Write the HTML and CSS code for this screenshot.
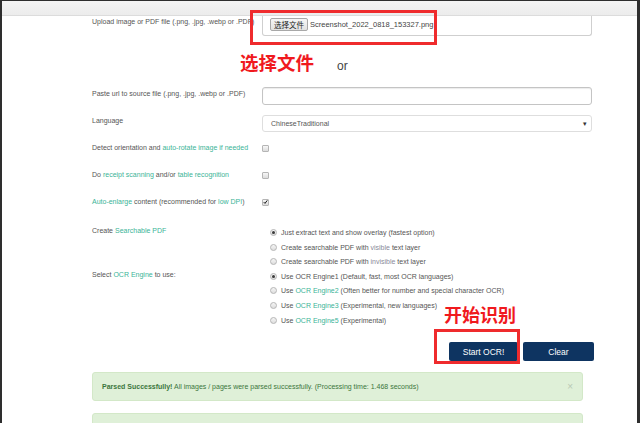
FILE: index.html
```html
<!DOCTYPE html>
<html lang="en">
<head>
<meta charset="utf-8">
<title>OCR upload</title>
<link rel="stylesheet" href="styles.css">
</head>
<body>
<div class="frame">
  <div class="topbar"></div>
  <div class="form">
    <div class="row row-upload">
      <div class="label">Upload image or PDF file (.png, .jpg, .webp or .PDF)</div>
      <div class="filebox">
        <span class="filebtn">选择文件</span><span class="filename">Screenshot_2022_0818_153327.png</span>
      </div>
    </div>
    <div class="row row-or"><span class="or">or</span></div>
    <div class="row row-url">
      <div class="label">Paste url to source file (.png, .jpg, .webp or .PDF)</div>
      <div class="input"></div>
    </div>
    <div class="row row-lang">
      <div class="label">Language</div>
      <div class="select"><span>ChineseTraditional</span><span class="caret">▾</span></div>
    </div>
    <div class="row row-check first">
      <div class="label">Detect orientation and <span class="link">auto-rotate image if needed</span></div>
      <span class="cb"></span>
    </div>
    <div class="row row-check">
      <div class="label">Do <span class="link">receipt scanning</span> and/or <span class="link">table recognition</span></div>
      <span class="cb"></span>
    </div>
    <div class="row row-check">
      <div class="label"><span class="link">Auto-enlarge</span> content (recommended for <span class="link">low DPI</span>)</div>
      <span class="cb checked"><svg viewBox="0 0 8 8" width="6" height="6"><path d="M1.2 4.2 L3.2 6.2 L6.8 1.4" fill="none" stroke="#111" stroke-width="1.6"/></svg></span>
    </div>
    <div class="row row-radio first">
      <div class="label">Create <span class="link">Searchable PDF</span></div>
      <div class="radios">
        <div class="opt"><span class="rd on"></span>Just extract text and show overlay (fastest option)</div>
        <div class="opt"><span class="rd"></span>Create searchable PDF with <span class="soft">visible</span> text layer</div>
        <div class="opt"><span class="rd"></span>Create searchable PDF with <span class="soft">invisible</span> text layer</div>
      </div>
    </div>
    <div class="row row-radio">
      <div class="label">Select <span class="link">OCR Engine</span> to use:</div>
      <div class="radios">
        <div class="opt"><span class="rd on"></span>Use OCR Engine1 (Default, fast, most OCR languages)</div>
        <div class="opt"><span class="rd"></span>Use <span class="link">OCR Engine2</span> (Often better for number and special character OCR)</div>
        <div class="opt"><span class="rd"></span>Use <span class="link">OCR Engine3</span> (Experimental, new languages)</div>
        <div class="opt"><span class="rd"></span>Use <span class="link">OCR Engine5</span> (Experimental)</div>
      </div>
    </div>
    <div class="row row-buttons">
      <button class="btn btn-start">Start OCR!</button>
      <button class="btn btn-clear">Clear</button>
    </div>
    <div class="alert first"><b>Parsed Successfully!</b> All images / pages were parsed successfully. (Processing time: 1.468 seconds)<span class="close">×</span></div>
    <div class="alert"><b>Download Searchable PDF:</b> Searchable PDF not generated as it was not requested.<span class="close">×</span></div>
  </div>

  <div class="anno-box box1"></div>
  <div class="anno-text text1">选择文件</div>
  <div class="anno-text text2">开始识别</div>
  <div class="anno-box box2"></div>
</div>
</body>
</html>
```

FILE: styles.css
```css
html, body {
  margin: 0;
  padding: 0;
  background: #fff;
}
body {
  font-family: "Liberation Sans", Arial, sans-serif;
  font-size: 7px;
  color: #555;
}
.frame {
  position: relative;
  width: 635px;
  height: 422px;
  border-top: 1px solid #2e2e2e;
  border-left: 2px solid #2e2e2e;
  border-right: 3px solid #2e2e2e;
  overflow: hidden;
  background: #fff;
}
.topbar {
  height: 14px;
  background: linear-gradient(#f4f4f4, #ececec);
  border-bottom: 1px solid #dcdcdc;
}
.form {
  padding-left: 90px;
}
.row {
  display: flex;
  align-items: flex-start;
}
.label {
  width: 170px;
  flex: none;
  line-height: 10px;
  white-space: nowrap;
}
.link {
  color: #3bb497;
}
.soft {
  color: #8a8a9a;
}
.row-upload .label {
  margin-top: 1px;
}
.filebox {
  width: 330px;
  height: 20px;
  box-sizing: border-box;
  border: 1px solid #cfcfcf;
  border-top: none;
  border-radius: 0 0 3px 3px;
  display: flex;
  align-items: center;
  padding-left: 7px;
}
.filebtn {
  font-family: "Noto Sans CJK SC", sans-serif;
  font-size: 7.5px;
  line-height: 11px;
  color: #222;
  padding: 0 3px;
  border: 1px solid #a8a8a8;
  border-radius: 2px;
  background: linear-gradient(#f6f6f6, #e2e2e2);
  margin-top: -2px;
}
.filename {
  font-size: 7.5px;
  color: #444;
  margin-left: 2px;
  margin-top: -2px;
}
.row-or {
  margin-top: 23px;
  height: 14px;
}
.or {
  margin-left: 245px;
  font-size: 12px;
  line-height: 14px;
  color: #444;
}
.row-url {
  margin-top: 14px;
}
.row-url .label {
  margin-top: 2px;
}
.input {
  width: 330px;
  height: 18px;
  box-sizing: border-box;
  border: 1px solid #c4c4c4;
  border-radius: 3px;
  box-shadow: inset 0 1px 1px rgba(0,0,0,0.08);
}
.row-lang {
  margin-top: 10px;
}
.row-lang .label {
  margin-top: 1px;
}
.select {
  width: 330px;
  height: 17px;
  box-sizing: border-box;
  border: 1px solid #dedede;
  border-radius: 3px;
  display: flex;
  align-items: center;
  justify-content: space-between;
  padding: 0 4px 0 8px;
  font-size: 7px;
  color: #555;
}
.caret {
  font-size: 7px;
  color: #333;
}
.row-check {
  margin-top: 17px;
  height: 10px;
  align-items: center;
}
.row-check.first {
  margin-top: 11px;
}
.cb {
  width: 5px;
  height: 5px;
  border: 1px solid #b5b5b5;
  border-radius: 1px;
  background: linear-gradient(#f7f7f7, #dcdcdc);
  display: flex;
  align-items: center;
  justify-content: center;
}
.cb svg {
  display: block;
}
.row-radio {
  margin-top: 0;
}
.row-radio.first {
  margin-top: 19px;
}
.row-radio .label {
  line-height: 9px;
}
.radios {
  margin-left: 8px;
}
.opt {
  height: 14.6px;
  line-height: 14.6px;
  white-space: nowrap;
}
.rd {
  display: inline-block;
  vertical-align: -1px;
  width: 5px;
  height: 5px;
  border: 1px solid #b5b5b5;
  border-radius: 50%;
  background: linear-gradient(#f5f5f5, #dedede);
  margin-right: 4px;
  position: relative;
}
.rd.on::after {
  content: "";
  position: absolute;
  left: 1px;
  top: 1px;
  width: 3px;
  height: 3px;
  border-radius: 50%;
  background: #3a3a3a;
}
.row-buttons {
  margin-top: 14px;
  padding-left: 357px;
  gap: 5px;
}
.btn {
  height: 19px;
  border: none;
  border-radius: 2px;
  background: #0e3461;
  color: #fff;
  font-family: "Liberation Sans", Arial, sans-serif;
  font-size: 8.5px;
  padding: 0;
}
.btn-start {
  width: 69px;
}
.btn-clear {
  width: 71px;
}
.alert {
  position: relative;
  width: 470px;
  height: 27px;
  margin-top: 11px;
  padding-left: 9px;
  padding-right: 10px;
  background: #dff0d8;
  border: 1px solid #d3e8c8;
  border-radius: 3px;
  color: #3c763d;
  font-size: 7px;
  line-height: 27px;
  white-space: nowrap;
}
.alert + .alert {
  margin-top: 12px;
  line-height: 34px;
}
.alert b {
  font-weight: bold;
}
.close {
  position: absolute;
  right: 9px;
  top: 0;
  font-size: 10px;
  color: #b9c9b5;
}
.anno-box {
  position: absolute;
  border: 3px solid #ef2b2d;
  box-sizing: border-box;
}
.box1 {
  left: 248px;
  top: 9px;
  width: 187px;
  height: 35px;
}
.box2 {
  left: 432px;
  top: 328px;
  width: 86px;
  height: 35px;
}
.anno-text {
  position: absolute;
  font-family: "Noto Sans CJK SC", sans-serif;
  font-weight: bold;
  color: #f0191e;
  font-size: 18.5px;
  line-height: 22px;
}
.text1 {
  left: 238px;
  top: 50px;
}
.text2 {
  left: 442px;
  top: 302px;
  font-size: 18px;
}
```
